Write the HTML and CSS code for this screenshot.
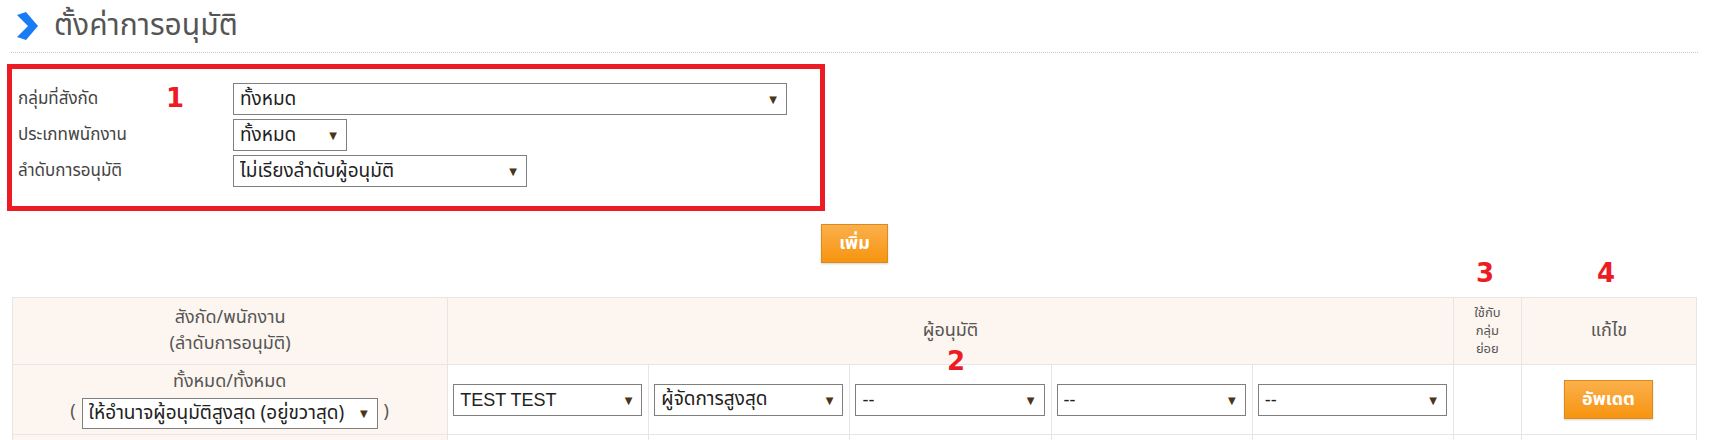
FILE: index.html
```html
<!DOCTYPE html>
<html lang="th">
<head>
<meta charset="utf-8">
<title>ตั้งค่าการอนุมัติ</title>
<link rel="stylesheet" href="styles.css">
</head>
<body>
<div class="page">
  <div class="title-bar">
    <svg class="chev" width="21" height="28" viewBox="0 0 21 28"><polygon points="0,3 9,0 21,14 9,28 0,25 11,14" fill="#1a7cf5"/></svg>
    <h1>ตั้งค่าการอนุมัติ</h1>
  </div>

  <div class="filter-box">
    <span class="mark mark-1">1</span>
    <div class="frow">
      <label>กลุ่มที่สังกัด</label>
      <div class="sel w-group"><select><option>ทั้งหมด</option></select></div>
    </div>
    <div class="frow">
      <label>ประเภทพนักงาน</label>
      <div class="sel w-type"><select><option>ทั้งหมด</option></select></div>
    </div>
    <div class="frow">
      <label>ลำดับการอนุมัติ</label>
      <div class="sel w-order"><select><option>ไม่เรียงลำดับผู้อนุมัติ</option></select></div>
    </div>
  </div>

  <div class="add-row"><button class="btn btn-add">เพิ่ม</button></div>

  <div class="table-wrap">
    <span class="mark mark-2">2</span>
    <span class="mark mark-3">3</span>
    <span class="mark mark-4">4</span>
    <table class="grid">
      <colgroup>
        <col class="c-who"><col class="c-ap"><col class="c-ap"><col class="c-ap"><col class="c-ap"><col class="c-ap"><col class="c-sub"><col class="c-edit">
      </colgroup>
      <thead>
        <tr>
          <th>สังกัด/พนักงาน<br>(ลำดับการอนุมัติ)</th>
          <th colspan="5">ผู้อนุมัติ</th>
          <th class="small">ใช้กับ<br>กลุ่ม<br>ย่อย</th>
          <th>แก้ไข</th>
        </tr>
      </thead>
      <tbody>
        <tr>
          <td class="who">ทั้งหมด/ทั้งหมด<br><span class="paren">(</span><span class="sel w-mode"><select><option>ให้อำนาจผู้อนุมัติสูงสุด (อยู่ขวาสุด)</option></select></span><span class="paren">)</span></td>
          <td><div class="sel"><select class="latin"><option>TEST TEST</option></select></div></td>
          <td><div class="sel"><select><option>ผู้จัดการสูงสุด</option></select></div></td>
          <td><div class="sel"><select class="latin"><option>--</option></select></div></td>
          <td><div class="sel"><select class="latin"><option>--</option></select></div></td>
          <td><div class="sel"><select class="latin"><option>--</option></select></div></td>
          <td></td>
          <td class="center"><button class="btn btn-upd">อัพเดต</button></td>
        </tr>
        <tr class="next">
          <td class="who"></td>
          <td></td>
          <td></td>
          <td></td>
          <td></td>
          <td></td>
          <td></td>
          <td></td>
        </tr>
      </tbody>
    </table>
  </div>
</div>
</body>
</html>
```

FILE: styles.css
```css
html, body {
  margin: 0;
  background: #fff;
}
body {
  font-family: Tahoma, "Noto Sans Thai", "Noto Sans", "Liberation Sans", sans-serif;
  color: #444;
}
.page {
  padding: 0 18px 0 11px;
}

/* title */
.title-bar {
  display: flex;
  align-items: center;
  gap: 16px;
  height: 52px;
  padding-left: 6px;
  border-bottom: 1px dotted #c9c9c9;
}
.title-bar h1 {
  margin: 0;
  font-size: 30px;
  font-weight: normal;
  color: #555;
}

/* red annotation box */
.filter-box {
  position: relative;
  box-sizing: border-box;
  width: 818px;
  margin: 11px 0 0 -4px;
  border: 5px solid #ed1c24;
  padding: 14px 0 19px 6px;
  display: flex;
  flex-direction: column;
  gap: 4px;
}
.frow {
  display: flex;
  align-items: center;
  height: 32px;
}
.frow label {
  width: 215px;
  font-size: 17px;
  color: #444;
}

/* select boxes */
.sel {
  position: relative;
  display: block;
  box-sizing: border-box;
  height: 32px;
  border: 1px solid #7f7f7f;
  background: #fff;
}
.sel select {
  appearance: none;
  -webkit-appearance: none;
  display: block;
  width: 100%;
  height: 100%;
  border: 0;
  background: transparent;
  font-family: inherit;
  font-size: 19px;
  color: #222;
  padding: 0 26px 0 6px;
  outline: none;
}
.sel select.latin {
  font-family: "Liberation Sans", Arial, sans-serif;
  font-size: 18px;
}
.sel::after {
  content: "▼";
  position: absolute;
  right: 9px;
  top: 50%;
  transform: translateY(-50%);
  font-family: "DejaVu Sans", sans-serif;
  font-size: 10px;
  color: #4a3519;
  pointer-events: none;
}
.w-group { width: 554px; }
.w-type { width: 114px; }
.w-order { width: 294px; }

/* annotations */
.mark {
  position: absolute;
  font-family: "DejaVu Sans", sans-serif;
  font-weight: bold;
  font-size: 26px;
  line-height: 1;
  color: #ed1c24;
}
.mark-1 { left: 154px; top: 16px; }
.mark-2 { left: 935px; top: 51px; }
.mark-3 { left: 1464px; top: -37px; }
.mark-4 { left: 1585px; top: -37px; }

/* buttons */
.add-row {
  display: flex;
  justify-content: center;
  margin-top: 13px;
}
.btn {
  box-sizing: border-box;
  border: 1px solid #d98b1b;
  background: linear-gradient(#fbb04c, #f7940f);
  color: #fff;
  font-family: inherit;
  font-weight: bold;
  font-size: 18px;
  padding: 0;
  box-shadow: 0 1px 2px rgba(0,0,0,0.18);
}
.btn-add { width: 67px; height: 39px; }
.btn-upd { width: 89px; height: 39px; }

/* table */
.table-wrap {
  position: relative;
  margin: 34px 1px 0;
}
.grid {
  width: 1685px;
  border-collapse: collapse;
  table-layout: fixed;
}
.c-who { width: 435px; }
.c-ap { width: 201px; }
.c-sub { width: 68px; }
.c-edit { width: 175px; }
.grid th, .grid td {
  border: 1px solid #e6e6e6;
  padding: 0;
  vertical-align: middle;
}
.grid th {
  background: #fdf5ef;
  font-weight: normal;
  font-size: 18px;
  color: #555;
  line-height: 26px;
  height: 66px;
}
.grid th.small {
  font-size: 13px;
  line-height: 18px;
}
.grid tbody tr { height: 70px; }
.grid td {
  padding: 0 6px 0 5px;
}
.grid td.who {
  background: #fdf5ef;
  text-align: center;
  font-size: 18px;
  color: #555;
  line-height: 24px;
}
.grid td.center { text-align: center; }
.who .sel {
  display: inline-block;
  vertical-align: middle;
  height: 31px;
  margin: 4px 0 0;
}
.w-mode { width: 296px; }
.paren {
  font-size: 18px;
  color: #555;
  padding: 0 6px;
  vertical-align: middle;
}
```
